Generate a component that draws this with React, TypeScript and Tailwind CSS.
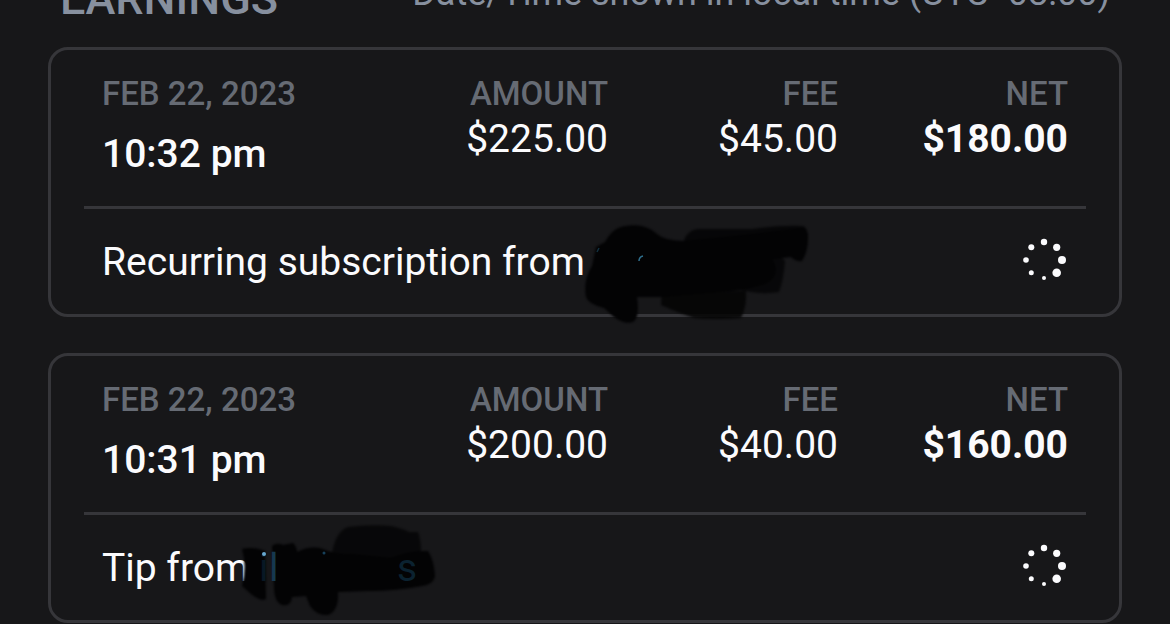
/**
 * Earnings List
 *
 * Dark mobile statement view with one card per transaction.
 * Every card shows the amount, the fee and the net, and the sender below.
 */

import type { ReactNode } from "react";

interface Earning {
  id: string;
  date: string;
  time: string;
  amount: string;
  fee: string;
  net: string;
  description: string;
  sender: ReactNode;
}

// Brushed out name of the subscriber
function SubscriberScribble() {
  return (
    <svg
      className="absolute -top-6 -left-[15px] h-[120px] w-[240px] max-w-none"
      viewBox="580 212 240 120"
      aria-hidden="true"
    >
      <g fill="#030304" className="blur-[1px]">
        <path
          d="M662 292 L746 291 Q747 306 741 318 Q716 320 694 318 Q676 312 661 305 Z"
          opacity="0.85"
        />
        <path
          d="M770 256 Q784 256 785 262 Q783 282 779 292 Q762 295 740 290 Z"
          opacity="0.75"
        />
        <path
          d="M684 240 Q688 230 698 229 L752 229 Q780 225 803 226 Q808 228 808 238 L780 250 L690 262 Z"
          opacity="0.8"
        />
        <path d="M684 241 Q740 236 803 228 Q808 230 808 238 Q808 252 802 261 Q796 262 791 257 L772 259 Q782 276 765 284 L742 290 L662 297 L637 297 Q640 318 633 322 Q625 325 614 317 L604 308 Q588 304 586 297 Q583 280 592 266 L596 247 L605 242 Q613 227 626 226 Q645 223 657 234 Q665 241 684 241 Z" />
      </g>
      <path d="M597 252 l2 -4" stroke="#12303f" strokeWidth="1.5" />
      <path d="M639 261 q0 -4 4 -5" stroke="#2f6f8d" strokeWidth="1.5" fill="none" />
    </svg>
  );
}

// Brushed out name of the tipper, a few letters still shine through
function TipperScribble() {
  return (
    <svg
      className="absolute -top-6 -left-5 h-[105px] w-[205px] max-w-none"
      viewBox="238 518 205 105"
      aria-hidden="true"
    >
      <g fill="#030304" className="blur-[1px]">
        <path
          d="M330 560 Q333 532 347 527 Q370 524 390 526 Q403 529 408 532 L417 532 Q420 540 420 552 L424 562 L340 570 Z"
          opacity="0.75"
        />
        <path d="M241 549 Q248 547 258 549 L264 551 L265 599 Q260 602 250 594 L241 586 Q246 566 241 549 Z" />
        <path d="M271 546 Q276 542 282 545 L292 543 Q296 547 296 552 Q310 545 322 549 Q334 555 350 554 L390 558 Q410 550 427 551 Q433 560 434 576 Q433 584 421 586 Q395 591 366 591 L337 592 Q338 611 327 615 Q316 616 309 606 L305 596 L291 597 Q290 607 281 605 Q273 602 273 586 Z" />
      </g>
      <g fontFamily="Roboto, sans-serif" fontSize="39">
        <text x="258" y="581" fill="#081824">
          i
        </text>
        <text x="268" y="581" fill="#16384f">
          l
        </text>
        <text x="396" y="581" fill="#0b2230">
          s
        </text>
      </g>
      <circle cx="263" cy="554" r="2" fill="#68a9d0" />
      <circle cx="323" cy="553" r="1.5" fill="#17405a" />
    </svg>
  );
}

const earnings: Earning[] = [
  {
    id: "sub-2232",
    date: "Feb 22, 2023",
    time: "10:32 pm",
    amount: "$225.00",
    fee: "$45.00",
    net: "$180.00",
    description: "Recurring subscription from",
    sender: <SubscriberScribble />,
  },
  {
    id: "tip-2231",
    date: "Feb 22, 2023",
    time: "10:31 pm",
    amount: "$200.00",
    fee: "$40.00",
    net: "$160.00",
    description: "Tip from",
    sender: <TipperScribble />,
  },
];

// Dots of the pending indicator, clockwise from the top
const dots = [
  { cx: 24, cy: 6, r: 3.2 },
  { cx: 36.7, cy: 11.3, r: 3.6 },
  { cx: 42, cy: 24, r: 4 },
  { cx: 36.7, cy: 36.7, r: 4.3 },
  { cx: 24, cy: 42, r: 2 },
  { cx: 11.3, cy: 36.7, r: 2.5 },
  { cx: 6, cy: 24, r: 2.8 },
  { cx: 11.3, cy: 11.2, r: 3 },
];

function PendingSpinner() {
  return (
    <svg
      className="size-12 shrink-0"
      viewBox="0 0 48 48"
      fill="#fbfbfd"
      role="img"
      aria-label="Pending"
    >
      {dots.map((dot) => (
        <circle key={`${dot.cx}-${dot.cy}`} {...dot} />
      ))}
    </svg>
  );
}

function Figure({
  label,
  value,
  strong = false,
}: {
  label: string;
  value: string;
  strong?: boolean;
}) {
  return (
    <div className="text-right">
      <dt className="text-[33px] leading-[42px] font-medium text-[#666b74] uppercase">
        {label}
      </dt>
      <dd
        className={`text-[39px] leading-[48px] ${strong ? "font-bold" : "font-normal"}`}
      >
        {value}
      </dd>
    </div>
  );
}

function EarningCard({ earning }: { earning: Earning }) {
  return (
    <article className="rounded-[20px] border-3 border-[#36363a] px-[33px]">
      {/* Date and figures */}
      <dl className="grid grid-cols-[6fr_5fr_5fr_5fr] border-b-3 border-[#36363a] px-[18px] pt-[23px] pb-7">
        <div className="whitespace-nowrap">
          <dt className="text-[33px] leading-[42px] font-medium text-[#666b74] uppercase">
            {earning.date}
          </dt>
          <dd className="mt-[15px] text-[39px] leading-[48px] font-medium">
            {earning.time}
          </dd>
        </div>
        <Figure label="Amount" value={earning.amount} />
        <Figure label="Fee" value={earning.fee} />
        <Figure label="Net" value={earning.net} strong />
      </dl>

      {/* Description and status */}
      <div className="flex items-start justify-between px-[18px] pt-[27px] pb-[26px]">
        <p className="flex gap-2.5 text-[39px] leading-[52px]">
          {earning.description}
          <a href="#sender" aria-label="Sender" className="relative">
            {earning.sender}
          </a>
        </p>
        <PendingSpinner />
      </div>
    </article>
  );
}

export default function App() {
  return (
    <main className="min-h-screen bg-[#171719] px-12 font-[Roboto,sans-serif] text-[#fbfbfd]">
      {/* Header, partly scrolled out of view */}
      <header className="flex h-[47px] items-end justify-between overflow-hidden px-3 text-[#87909f]">
        <h1 className="pb-[23px] text-[45px] leading-[50px] font-medium uppercase">
          Earnings
        </h1>
        <p className="pb-[33px] text-[36px] leading-[42px]">
          Date/Time shown in local time (UTC -08:00)
        </p>
      </header>

      {/* Transactions */}
      <section className="flex flex-col gap-9" aria-label="Transactions">
        {earnings.map((earning) => (
          <EarningCard key={earning.id} earning={earning} />
        ))}
      </section>
    </main>
  );
}
